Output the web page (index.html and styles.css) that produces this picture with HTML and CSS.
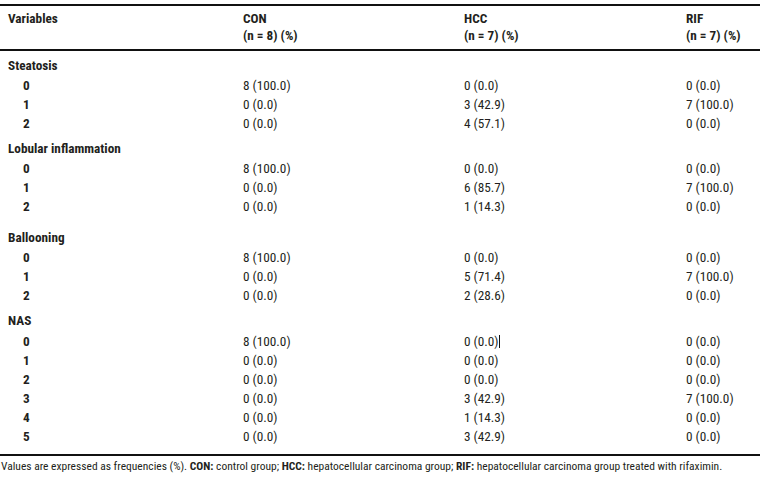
FILE: index.html
```html
<!DOCTYPE html>
<html>
<head>
<meta charset="utf-8">
<link rel="stylesheet" href="styles.css">
</head>
<body>
<div class="page">
  <table class="data">
    <colgroup>
      <col class="c-var">
      <col class="c-con">
      <col class="c-hcc">
      <col class="c-rif">
    </colgroup>
    <thead>
      <tr>
        <th class="first">Variables</th>
        <th>CON<br>(n = 8) (%)</th>
        <th>HCC<br>(n = 7) (%)</th>
        <th>RIF<br>(n = 7) (%)</th>
      </tr>
    </thead>
    <tbody>
      <tr class="group g1"><td class="first" colspan="4">Steatosis</td></tr>
      <tr class="row"><td class="sub">0</td><td>8 (100.0)</td><td>0 (0.0)</td><td>0 (0.0)</td></tr>
      <tr class="row"><td class="sub">1</td><td>0 (0.0)</td><td>3 (42.9)</td><td>7 (100.0)</td></tr>
      <tr class="row"><td class="sub">2</td><td>0 (0.0)</td><td>4 (57.1)</td><td>0 (0.0)</td></tr>

      <tr class="group g2"><td class="first" colspan="4">Lobular inflammation</td></tr>
      <tr class="row"><td class="sub">0</td><td>8 (100.0)</td><td>0 (0.0)</td><td>0 (0.0)</td></tr>
      <tr class="row"><td class="sub">1</td><td>0 (0.0)</td><td>6 (85.7)</td><td>7 (100.0)</td></tr>
      <tr class="row"><td class="sub">2</td><td>0 (0.0)</td><td>1 (14.3)</td><td>0 (0.0)</td></tr>

      <tr class="group g3"><td class="first" colspan="4">Ballooning</td></tr>
      <tr class="row"><td class="sub">0</td><td>8 (100.0)</td><td>0 (0.0)</td><td>0 (0.0)</td></tr>
      <tr class="row"><td class="sub">1</td><td>0 (0.0)</td><td>5 (71.4)</td><td>7 (100.0)</td></tr>
      <tr class="row"><td class="sub">2</td><td>0 (0.0)</td><td>2 (28.6)</td><td>0 (0.0)</td></tr>

      <tr class="group g4"><td class="first" colspan="4">NAS</td></tr>
      <tr class="row"><td class="sub">0</td><td>8 (100.0)</td><td>0 (0.0)<span class="caret"></span></td><td>0 (0.0)</td></tr>
      <tr class="row"><td class="sub">1</td><td>0 (0.0)</td><td>0 (0.0)</td><td>0 (0.0)</td></tr>
      <tr class="row"><td class="sub">2</td><td>0 (0.0)</td><td>0 (0.0)</td><td>0 (0.0)</td></tr>
      <tr class="row"><td class="sub">3</td><td>0 (0.0)</td><td>3 (42.9)</td><td>7 (100.0)</td></tr>
      <tr class="row"><td class="sub">4</td><td>0 (0.0)</td><td>1 (14.3)</td><td>0 (0.0)</td></tr>
      <tr class="row last"><td class="sub">5</td><td>0 (0.0)</td><td>3 (42.9)</td><td>0 (0.0)</td></tr>
    </tbody>
  </table>
  <p class="note">Values are expressed as frequencies (%). <b>CON:</b> control group; <b>HCC:</b> hepatocellular carcinoma group; <b>RIF:</b> hepatocellular carcinoma group treated with rifaximin.</p>
</div>
</body>
</html>
```

FILE: styles.css
```css
html, body {
  margin: 0;
  padding: 0;
  background: #ffffff;
}

body {
  font-family: Roboto, "Liberation Sans", Arial, sans-serif;
  font-stretch: 75%;
  color: #231f20;
  font-size: 13.25px;
}

.page {
  width: 760px;
  padding-top: 4px;
}

.data {
  width: 760px;
  border-collapse: collapse;
  table-layout: fixed;
}

.c-var { width: 243px; }
.c-con { width: 221px; }
.c-hcc { width: 222px; }
.c-rif { width: 74px; }

.data th {
  text-align: left;
  vertical-align: top;
  font-weight: bold;
  line-height: 17px;
  padding: 4px 0 5px 0;
  border-top: 2px solid #111;
  border-bottom: 2px solid #111;
  white-space: nowrap;
}

.data th.first { padding-left: 8px; }

.data td {
  padding: 0;
  white-space: nowrap;
  vertical-align: top;
}

.group td {
  font-weight: bold;
  line-height: 17px;
  padding: 7px 0 2px 8px;
}

.group.g1 td { padding-top: 6px; }
.group.g3 td { padding-top: 13px; }
.group.g4 td { padding-bottom: 3px; }

.row td {
  line-height: 19px;
}

.row td.sub {
  font-weight: bold;
  padding-left: 23px;
}

.row.last td {
  padding-bottom: 8px;
  border-bottom: 2px solid #111;
}

.caret {
  display: inline-block;
  width: 0;
  height: 13px;
  border-left: 1px solid #111;
  vertical-align: -2px;
}

.note {
  margin: 4px 0 0 1px;
  font-size: 11.5px;
  line-height: 13px;
  white-space: nowrap;
}

.note b { font-weight: bold; }
```
